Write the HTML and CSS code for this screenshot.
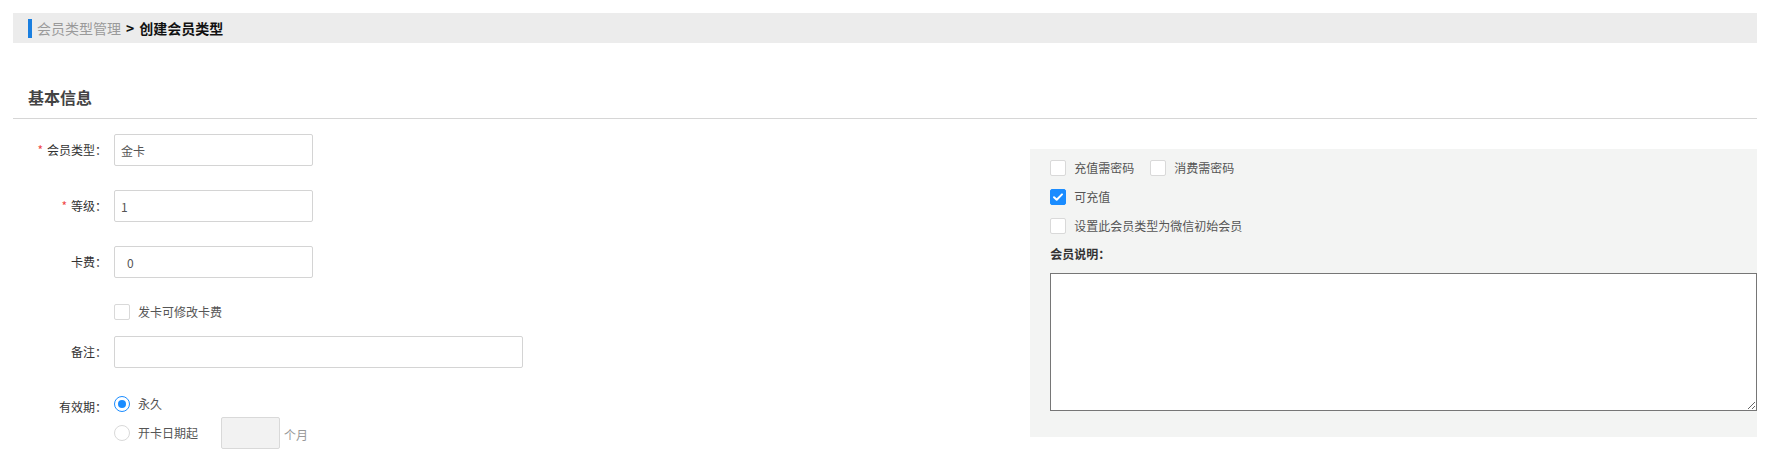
FILE: index.html
```html
<!DOCTYPE html>
<html>
    <head>
        <meta charset="utf-8">
        <link rel="stylesheet" href="styles.css">
    </head>
    <body>
        <div class="page">
            <div class="crumb">
                <span class="crumb-bar"></span>
                <span class="crumb-link">会员类型管理</span>
                <span class="crumb-sep">&gt;</span>
                <span class="crumb-current">创建会员类型</span>
            </div>

            <h3 class="section-title">基本信息</h3>

            <div class="content">
                <!-- left column: basic fields -->
                <div class="form-left">
                    <div class="row row-first">
                        <label class="field-label"><i class="req">*</i>会员类型：</label>
                        <input class="text-input" type="text" value="金卡">
                    </div>
                    <div class="row">
                        <label class="field-label"><i class="req">*</i>等级：</label>
                        <input class="text-input" type="text" value="1">
                    </div>
                    <div class="row">
                        <label class="field-label">卡费：</label>
                        <input class="text-input fee-input" type="text" value="0">
                    </div>
                    <div class="row row-check">
                        <span class="field-label"></span>
                        <span class="check"></span>
                        <span class="check-text">发卡可修改卡费</span>
                    </div>
                    <div class="row row-remark">
                        <label class="field-label">备注：</label>
                        <input class="text-input wide-input" type="text">
                    </div>
                    <div class="row row-period">
                        <label class="field-label period-label">有效期：</label>
                        <div class="radio-group">
                            <div class="radio-line">
                                <span class="radio radio-on"></span>
                                <span class="check-text">永久</span>
                            </div>
                            <div class="radio-line radio-line-tall">
                                <span class="radio"></span>
                                <span class="check-text">开卡日期起</span>
                                <input class="month-input" type="text" disabled>
                                <span class="unit">个月</span>
                            </div>
                        </div>
                    </div>
                </div>

                <!-- right column: options panel -->
                <div class="panel">
                    <div class="opt-line">
                        <span class="check"></span>
                        <span class="check-text">充值需密码</span>
                        <span class="check check-gap"></span>
                        <span class="check-text">消费需密码</span>
                    </div>
                    <div class="opt-line">
                        <span class="check check-on">
                            <svg width="16" height="16" viewBox="0 0 16 16"><path d="M4 8.2l2.7 2.6L12 5.4" fill="none" stroke="#fff" stroke-width="2" stroke-linecap="round" stroke-linejoin="round"/></svg>
                        </span>
                        <span class="check-text">可充值</span>
                    </div>
                    <div class="opt-line">
                        <span class="check"></span>
                        <span class="check-text">设置此会员类型为微信初始会员</span>
                    </div>
                    <div class="desc-label">会员说明：</div>
                    <textarea class="desc-box"></textarea>
                </div>
            </div>
        </div>
    </body>
</html>
```

FILE: styles.css
```css
body {
    margin: 0;
    padding: 0;
    background: #fff;
    font-family: "Noto Sans CJK SC", "Noto Sans", sans-serif;
    font-size: 12px;
    color: #333;
}
.page {
    padding: 13px 12px 0 13px;
}
.crumb {
    height: 30px;
    background-color: #ececec;
    display: flex;
    align-items: center;
    padding-left: 15px;
    font-size: 14px;
}
.crumb-bar {
    width: 4px;
    height: 19px;
    background-color: #1a7fe0;
    margin-right: 5px;
}
.crumb-link {
    color: #9a9a9a;
}
.crumb-sep {
    font-weight: bold;
    color: #111;
    margin: 0 5px;
}
.crumb-current {
    font-weight: bold;
    color: #111;
}
.section-title {
    margin: 42px 0 0 0;
    padding: 0 0 9px 15px;
    font-size: 16px;
    line-height: 24px;
    font-weight: bold;
    color: #444;
    border-bottom: 1px solid #d6d6d6;
}
.content {
    display: grid;
    grid-template-columns: 7fr 5fr;
    align-items: start;
}
.form-left {
    padding-top: 15px;
}
.row {
    display: flex;
    align-items: center;
    margin-top: 24px;
}
.row-first {
    margin-top: 0;
}
.row-check {
    margin-top: 26px;
    height: 16px;
}
.row-remark {
    margin-top: 16px;
}
.row-period {
    margin-top: 28px;
    align-items: flex-start;
}
.field-label {
    width: 94px;
    text-align: right;
    margin-right: 7px;
    color: #333;
    line-height: 16px;
}
.period-label {
    line-height: 20px;
    margin-top: 1px;
}
.req {
    font-style: normal;
    color: #f04848;
    margin-right: 4px;
}
.text-input {
    box-sizing: border-box;
    width: 199px;
    height: 32px;
    border: 1px solid #d4d4d4;
    border-radius: 2px;
    padding: 0 6px;
    font-family: inherit;
    font-size: 12px;
    color: #555;
    outline: none;
}
.fee-input {
    padding-left: 12px;
}
.wide-input {
    width: 409px;
}
.check {
    box-sizing: border-box;
    width: 16px;
    height: 16px;
    border: 1px solid #d9d9d9;
    border-radius: 2px;
    background: #fff;
    flex: none;
}
.check-on {
    background: #1a8cff;
    border-color: #1a8cff;
}
.check-on svg {
    display: block;
    margin: -1px;
}
.check-gap {
    margin-left: 16px;
}
.check-text {
    margin-left: 8px;
    color: #555;
    line-height: 16px;
}
.radio-group {
    display: flex;
    flex-direction: column;
}
.radio-line {
    display: flex;
    align-items: center;
    height: 16px;
}
.radio-line-tall {
    height: 32px;
    margin-top: 5px;
}
.radio {
    box-sizing: border-box;
    width: 16px;
    height: 16px;
    border: 1px solid #d9d9d9;
    border-radius: 50%;
    background: #fff;
    flex: none;
}
.radio-on {
    border-color: #1a8cff;
    display: flex;
    align-items: center;
    justify-content: center;
}
.radio-on::after {
    content: "";
    width: 8px;
    height: 8px;
    border-radius: 50%;
    background: #1a8cff;
}
.month-input {
    box-sizing: border-box;
    width: 59px;
    height: 32px;
    margin-left: 23px;
    background: #f2f2f2;
    border: 1px solid #d9d9d9;
    border-radius: 2px;
}
.unit {
    margin-left: 4px;
    margin-top: 2px;
    color: #999;
}
.panel {
    margin-top: 30px;
    background-color: #f3f4f3;
    padding: 11px 0 26px 20px;
}
.opt-line {
    display: flex;
    align-items: center;
    height: 16px;
    margin-bottom: 13px;
}
.desc-label {
    margin-top: -3px;
    line-height: 20px;
    font-weight: bold;
    color: #333;
}
.desc-box {
    display: block;
    box-sizing: border-box;
    width: 100%;
    height: 138px;
    margin-top: 9px;
    border: 1px solid #767676;
    border-radius: 0;
    padding: 2px;
    font-family: inherit;
}
```
